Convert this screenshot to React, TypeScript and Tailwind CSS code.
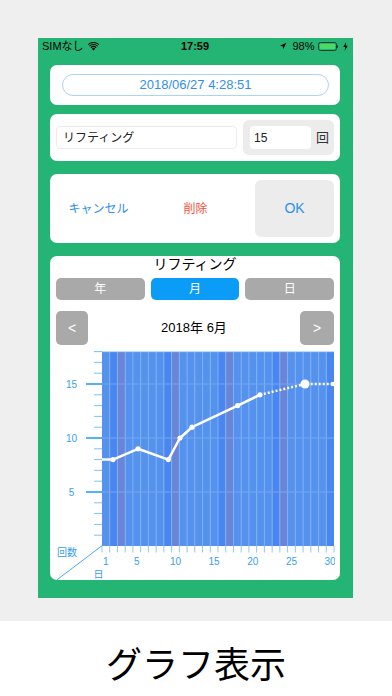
import { type JSX } from "react";

const FONT = "font-['Liberation_Sans','Noto_Sans_CJK_JP',sans-serif]";

// chart geometry (svg coords, origin at card x=50 / page y=348)
const X0 = 52;
const X1 = 284;
const Y1 = 198;
const COL = (X1 - X0) / 30;
const yv = (v: number) => Y1 - v * 10.8;

function dayColor(d: number): string {
    const dow = (d + 4) % 7; // June 1 2018 = Friday
    if (dow === 6) return "#4a86f0";
    if (dow === 0) return "#6a85d6";
    return "#5592ee";
}

const solid: [number, number][] = [
    [52, yv(8)],
    [63, yv(8)],
    [88, yv(9)],
    [118.3, yv(8)],
    [130, yv(10)],
    [142, yv(11)],
    [187.7, yv(13)],
    [210, yv(14)],
];

function Chart(): JSX.Element {
    const days = Array.from({ length: 30 }, (_, i) => i + 1);
    const ticks = Array.from({ length: 18 }, (_, i) => i + 1);
    return (
        <svg width="290" height="232" viewBox="0 0 290 232" className="block">
            <defs>
                <clipPath id="clip">
                    <rect x="0" y="0" width="285" height="232" />
                </clipPath>
            </defs>
            {days.map((d) => (
                <rect
                    key={d}
                    x={X0 + (d - 1) * COL}
                    y={yv(18)}
                    width={COL}
                    height={Y1 - yv(18)}
                    fill={dayColor(d)}
                />
            ))}
            {days.slice(1).map((d) => (
                <line
                    key={d}
                    x1={X0 + (d - 1) * COL}
                    x2={X0 + (d - 1) * COL}
                    y1={yv(18)}
                    y2={Y1}
                    stroke="#7cb0f5"
                    strokeWidth="1"
                />
            ))}
            {[5, 10, 15].map((v) => (
                <line key={v} x1={X0} x2={X1} y1={yv(v)} y2={yv(v)} stroke="#74a6f0" strokeWidth="1" />
            ))}
            <line x1={44} x2={X1} y1={yv(18)} y2={yv(18)} stroke="#bcdcf7" strokeWidth="1" />
            {ticks.map((v) => (
                <line
                    key={v}
                    x1={v % 5 === 0 ? 36 : 44}
                    x2={X0}
                    y1={yv(v)}
                    y2={yv(v)}
                    stroke={v % 5 === 0 ? "#1a9bf2" : "#7cc4f5"}
                    strokeWidth={v % 5 === 0 ? 1.5 : 1}
                />
            ))}
            {[5, 10, 15].map((v) => (
                <text
                    key={v}
                    x="21.5"
                    y={yv(v) + 3.5}
                    textAnchor="middle"
                    fontSize="10"
                    fill="#3aa0f0"
                    fontFamily="Liberation Sans, sans-serif"
                >
                    {v}
                </text>
            ))}
            {Array.from({ length: 31 }, (_, k) => (
                <line
                    key={k}
                    x1={X0 + k * COL}
                    x2={X0 + k * COL}
                    y1={Y1}
                    y2={Y1 + 6.5}
                    stroke="#8ccaf5"
                    strokeWidth="1"
                />
            ))}
            <g clipPath="url(#clip)">
                {[1, 5, 10, 15, 20, 25, 30].map((d) => (
                    <text
                        key={d}
                        x={X0 + (d - 0.5) * COL}
                        y="217"
                        textAnchor="middle"
                        fontSize="10"
                        fill="#3aa0f0"
                        fontFamily="Liberation Sans, sans-serif"
                    >
                        {d}
                    </text>
                ))}
            </g>
            <line x1="6.7" y1="232" x2="52.3" y2="197.5" stroke="#4aa8f0" strokeWidth="1" />
            <text x="7" y="208" fontSize="10" fill="#3aa0f0" fontFamily="Noto Sans CJK JP, sans-serif">
                回数
            </text>
            <text x="43.5" y="230" fontSize="10" fill="#3aa0f0" fontFamily="Noto Sans CJK JP, sans-serif">
                日
            </text>
            <polyline
                points={solid.map((p) => p.join(",")).join(" ")}
                fill="none"
                stroke="#ffffff"
                strokeWidth="2.5"
                strokeLinejoin="round"
            />
            <polyline
                points={`210,${yv(14)} 255,${yv(15)} 284,${yv(15)}`}
                fill="none"
                stroke="#ffffff"
                strokeWidth="2.5"
                strokeDasharray="2 2"
            />
            {solid.slice(1).map((p, i) => (
                <circle key={i} cx={p[0]} cy={p[1]} r="2.6" fill="#ffffff" />
            ))}
            <circle cx="255" cy={yv(15)} r="4.5" fill="#ffffff" />
            <circle cx="283" cy={yv(15)} r="2.3" fill="#ffffff" />
        </svg>
    );
}

function StatusBar(): JSX.Element {
    return (
        <div className="h-[16px] flex items-center pl-[4px] pr-[5px] text-[11px] text-black">
            <div className="flex-1 flex items-center gap-[4px]">
                <span>SIMなし</span>
                <svg width="11" height="9" viewBox="0 0 22 17">
                    <path d="M11 16.5 7.6 12.8a4.8 4.8 0 0 1 6.8 0Z" fill="#000" />
                    <path d="M4.9 10A8.9 8.9 0 0 1 17.1 10l-1.6 1.7a6.6 6.6 0 0 0-9 0Z" fill="#000" />
                    <path d="M2.1 7a13 13 0 0 1 17.8 0l-1.5 1.6a10.8 10.8 0 0 0-14.8 0Z" fill="#000" />
                    <path d="M-0.8 4A17.3 17.3 0 0 1 22.8 4l-1.5 1.6A15 15 0 0 0 0.7 5.6Z" fill="#000" />
                </svg>
            </div>
            <span className="font-bold">17:59</span>
            <div className="flex-1 flex items-center justify-end gap-[3px]">
                <svg width="8" height="8" viewBox="0 0 24 24">
                    <polygon points="3 11 22 2 13 21 11 13 3 11" fill="#000" />
                </svg>
                <span className="ml-[2px]">98%</span>
                <div className="flex items-center">
                    <div className="w-[19px] h-[9px] rounded-[2.5px] border border-[#1b3f2c] p-[1px]">
                        <div className="w-full h-full rounded-[1px] bg-[#4cd964]" />
                    </div>
                    <div className="w-[1.5px] h-[3px] bg-[#1b3f2c] rounded-r-[1px]" />
                </div>
                <svg width="5" height="9" viewBox="0 0 5 9" className="ml-[2px]">
                    <polygon points="3.2,0 0.3,5 2.3,5 1.6,9 4.7,3.8 2.6,3.8" fill="#000" />
                </svg>
            </div>
        </div>
    );
}

function App(): JSX.Element {
    return (
        <div className={`w-[392px] h-[696px] flex flex-col ${FONT}`}>
            <div className="h-[621px] bg-[#efefef] pt-[38px] pl-[38px]">
                <div className="w-[315px] h-[560px] bg-[#24b574] flex flex-col">
                    <StatusBar />
                    <div className="flex flex-col pl-[12px] pr-[13px]">
                        <div className="mt-[11px] h-[40px] bg-white rounded-[7px] flex items-center pl-[12px] pr-[11px]">
                            <div className="w-full h-[22px] rounded-full border border-[#a8d4f7] flex items-center justify-center text-[13px] text-[#2f8ff0]">
                                2018/06/27 4:28:51
                            </div>
                        </div>
                        <div className="mt-[9px] h-[47px] bg-white rounded-[7px] flex items-center px-[6px] gap-[6px]">
                            <div className="flex-1 h-[23px] rounded-[4px] border border-[#ececec] flex items-center pl-[6px] text-[12px] text-[#222]">
                                リフティング
                            </div>
                            <div className="w-[91px] h-[35px] rounded-[6px] bg-[#ececec] flex items-center pl-[7px]">
                                <div className="w-[61px] h-[23px] rounded-[4px] bg-white flex items-center pl-[4px] text-[12px] text-[#222]">
                                    15
                                </div>
                                <span className="ml-[5px] text-[13px] text-[#333]">回</span>
                            </div>
                        </div>
                        <div className="mt-[13px] h-[69px] bg-white rounded-[7px] flex items-center pr-[6px]">
                            <div className="w-[97px] text-center text-[12px] text-[#2f8ff0]">キャンセル</div>
                            <div className="w-[97px] text-center text-[12px] text-[#f4503c]">削除</div>
                            <div className="flex-1" />
                            <div className="w-[79px] h-[57px] rounded-[6px] bg-[#ececec] flex items-center justify-center text-[14px] text-[#2f8ff0]">
                                OK
                            </div>
                        </div>
                        <div className="mt-[13px] h-[324px] bg-white rounded-[7px] flex flex-col overflow-hidden">
                            <div className="h-[16px] leading-[16px] text-center text-[14px] text-black">リフティング</div>
                            <div className="mt-[6px] flex gap-[6px] px-[6px]">
                                <div className="flex-1 h-[22px] rounded-[5px] bg-[#a9a9a9] flex items-center justify-center text-[12px] text-white">年</div>
                                <div className="flex-1 h-[22px] rounded-[5px] bg-[#0a9cf6] flex items-center justify-center text-[12px] text-white">月</div>
                                <div className="flex-1 h-[22px] rounded-[5px] bg-[#a9a9a9] flex items-center justify-center text-[12px] text-white">日</div>
                            </div>
                            <div className="mt-[11px] flex items-center justify-between px-[6px]">
                                <div className="w-[32px] h-[34px] rounded-[5px] bg-[#a9a9a9] flex items-center justify-center text-[14px] text-white">&lt;</div>
                                <div className="text-[13px] text-black">2018年 6月</div>
                                <div className="w-[34px] h-[34px] rounded-[5px] bg-[#a9a9a9] flex items-center justify-center text-[14px] text-white">&gt;</div>
                            </div>
                            <div className="mt-[3px]">
                                <Chart />
                            </div>
                        </div>
                    </div>
                </div>
            </div>
            <div className="h-[75px] bg-white flex items-center justify-center pt-[6px]">
                <span className="text-[36px] leading-none text-black font-['Noto_Sans_CJK_JP',sans-serif] font-normal">
                    グラフ表示
                </span>
            </div>
        </div>
    );
}

export default App;
